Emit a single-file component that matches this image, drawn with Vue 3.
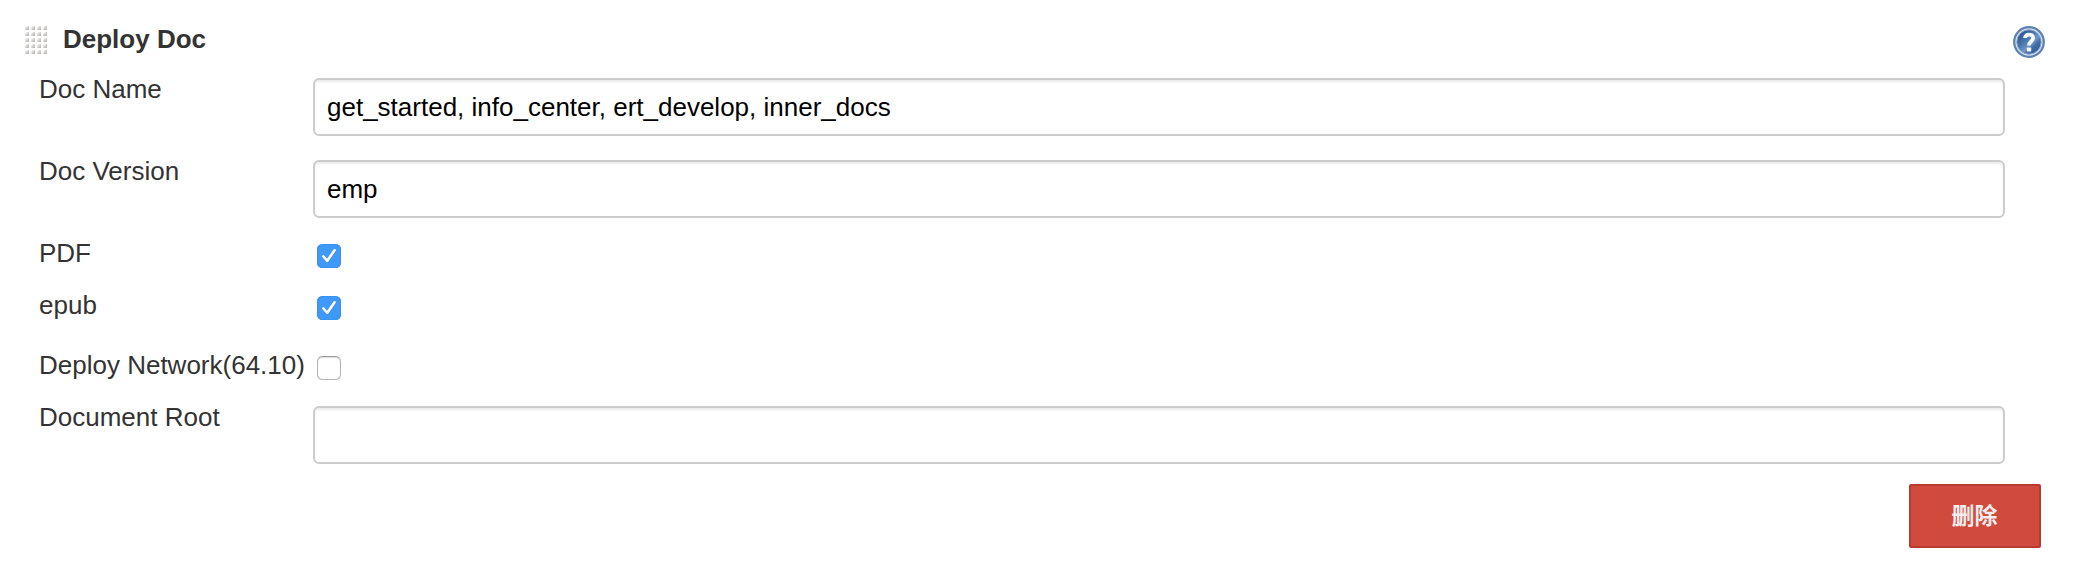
<script setup>
import { ref } from 'vue'

const rows = ref([
  { label: 'Doc Name', type: 'text', value: 'get_started, info_center, ert_develop, inner_docs', size: 'tall' },
  { label: 'Doc Version', type: 'text', value: 'emp', size: 'tall' },
  { label: 'PDF', type: 'check', value: true, size: 'short' },
  { label: 'epub', type: 'check', value: true, size: 'medium' },
  { label: 'Deploy Network(64.10)', type: 'check', value: false, size: 'short' },
  { label: 'Document Root', type: 'text', value: '', size: 'tall' },
])
</script>

<template>
  <section class="panel">
    <header class="head">
      <svg class="grip" width="22" height="28" viewBox="0 0 22 28">
        <defs>
          <linearGradient id="dot" x1="0" y1="0" x2="1" y2="1">
            <stop offset="0.1" stop-color="#fff" />
            <stop offset="0.55" stop-color="#cfcecb" />
            <stop offset="1" stop-color="#b0afac" />
          </linearGradient>
        </defs>
        <template v-for="r in 5" :key="r">
          <rect v-for="c in 4" :key="c" :x="(c - 1) * 6" :y="(r - 1) * 6" width="4" height="4" fill="url(#dot)" />
        </template>
      </svg>
      <h2 class="title">Deploy Doc</h2>
      <svg class="help" width="32" height="32" viewBox="0 0 32 32">
        <defs>
          <linearGradient id="disc" x1="0" y1="0" x2="1" y2="1">
            <stop offset="0.1" stop-color="#24508f" />
            <stop offset="0.4" stop-color="#4b77ae" />
            <stop offset="0.58" stop-color="#7197c4" />
            <stop offset="0.7" stop-color="#3f6ba6" />
            <stop offset="1" stop-color="#2a5592" />
          </linearGradient>
        </defs>
        <circle cx="16" cy="16" r="14.8" fill="#d3dfed" stroke="#5b80b2" stroke-width="2.2" />
        <circle cx="16" cy="16" r="12.2" fill="url(#disc)" stroke="#8ba7cb" stroke-width="1" />
        <path d="M12 12C12 9.6 13.6 8.6 16.1 8.6C18.7 8.6 20.1 9.8 20.1 12C20.1 15.2 16 15.6 16 19.4" fill="none" stroke="#f8fafc" stroke-width="3.7" />
        <rect x="13.9" y="21.4" width="4.3" height="4.2" rx="0.9" fill="#f8fafc" />
      </svg>
    </header>

    <div class="rows">
      <div v-for="row in rows" :key="row.label" class="row" :class="row.size">
        <label class="label">{{ row.label }}</label>
        <input v-if="row.type === 'text'" v-model="row.value" class="field" type="text" />
        <span v-else class="check" :class="{ on: row.value }">
          <svg v-if="row.value" width="24" height="24" viewBox="0 0 24 24">
            <path d="M6.4 13.2L10.3 17.6L17.6 7" fill="none" stroke="#2f7ac8" stroke-opacity="0.55" stroke-width="2.6" stroke-linecap="round" stroke-linejoin="round" />
            <path d="M6.4 12.5L10.3 16.8L17.6 6.3" fill="none" stroke="#fff" stroke-width="2.6" stroke-linecap="round" stroke-linejoin="round" />
          </svg>
        </span>
      </div>
    </div>

    <footer class="foot">
      <button class="delete" type="button">删除</button>
    </footer>
  </section>
</template>

<style>
body {
  background: #fff;
}
</style>

<style scoped>
.panel {
  box-sizing: border-box;
  width: 2094px;
  height: 582px;
  padding-top: 24px;
  background: #fff;
  color: #333;
  font-family: "Liberation Sans", Arial, "Noto Sans CJK SC", sans-serif;
  font-size: 26px;
  line-height: 30px;
}
.head {
  display: flex;
  align-items: flex-start;
  height: 50px;
  padding: 0 49px 0 25px;
}
.grip {
  margin-top: 2px;
}
.title {
  margin: 0 auto 0 16px;
  font-size: 26px;
  font-weight: bold;
  line-height: 30px;
}
.help {
  margin-top: 2px;
}
.rows {
  padding: 0 89px 0 39px;
}
.row {
  display: grid;
  grid-template-columns: 274px 1fr;
  align-items: start;
}
.tall {
  height: 82px;
}
.medium {
  height: 60px;
}
.short {
  height: 52px;
}
.label {
  white-space: nowrap;
}
.field {
  box-sizing: border-box;
  width: 100%;
  height: 58px;
  margin: 4px 0 0;
  padding: 0 12px;
  border: 2px solid #ccc;
  border-radius: 6px;
  outline: none;
  background: #fff;
  box-shadow: inset 0 2px 2px rgba(0, 0, 0, 0.075);
  color: #000;
  font: inherit;
}
.check {
  display: block;
  box-sizing: border-box;
  width: 24px;
  height: 24px;
  margin: 6px 0 0 4px;
  border: 1px solid #b4b4b4;
  border-top-color: #999;
  border-radius: 5.5px;
  background: #fff;
  box-shadow: inset 0 1px 1px #ddd;
}
.check.on {
  border: 0;
  background: #3f99f8;
  box-shadow: inset 0 0 0 1px #3b91f0;
}
.check svg {
  display: block;
}
.foot {
  display: flex;
  justify-content: flex-end;
  padding-right: 53px;
}
.delete {
  box-sizing: border-box;
  width: 132px;
  height: 64px;
  padding: 0 1px 4px 0;
  border: 2px solid #b93a2e;
  border-radius: 2px;
  background: #d14a3e;
  color: #f1eeee;
  font-family: "Noto Sans CJK SC", sans-serif;
  font-size: 23px;
  font-weight: bold;
  line-height: 34px;
}
</style>
